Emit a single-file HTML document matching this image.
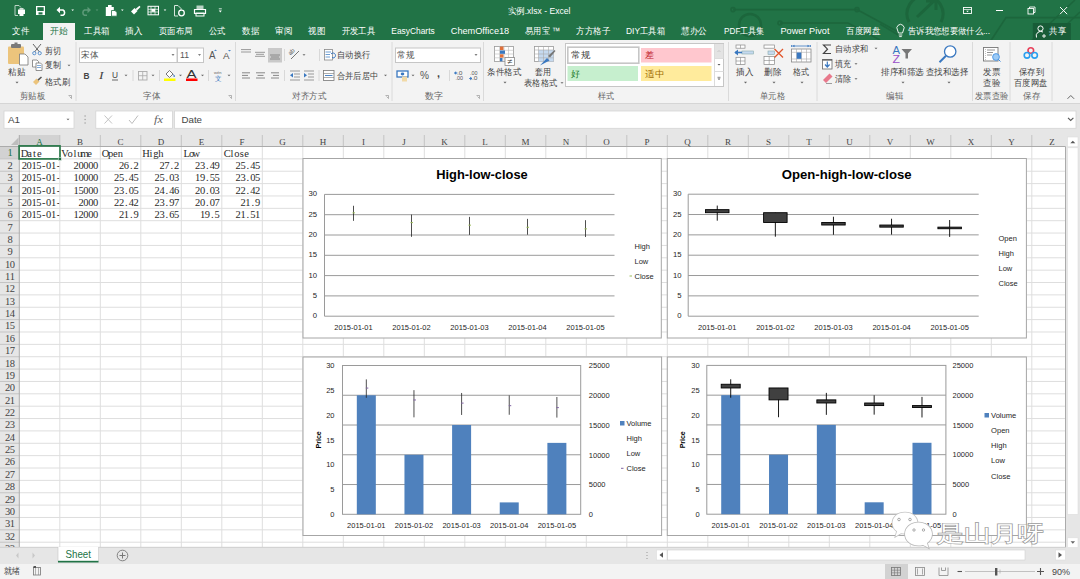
<!DOCTYPE html><html><head><meta charset="utf-8"><style>*{margin:0;padding:0}html,body{width:1080px;height:579px;overflow:hidden;background:#fff;font-family:"Liberation Sans",sans-serif}</style></head><body><svg width="1080" height="579" viewBox="0 0 1080 579" style="position:absolute;left:0;top:0;font-family:'Liberation Sans',sans-serif">
<rect x="0" y="0" width="1080" height="40" fill="#217346" />
<g stroke="#1b6239" stroke-width="1.6" fill="none" opacity="0.75">
<path d="M733 9.6H857L880 22L900 33"/>
<circle cx="733" cy="9.6" r="2"/><circle cx="857" cy="9.6" r="2"/>
<path d="M780 23H848L880 40"/><circle cx="780" cy="23" r="2"/>
<circle cx="750" cy="25" r="11" stroke-width="2.5"/>
<path d="M909 22A18 18 0 1 1 941 22" stroke-width="3"/>
<path d="M917 17L935 0M926 1H936V10" stroke-width="3"/>
<path d="M990 42L1006 17.6H1080"/>
<path d="M1030 42L1075 0M1048 42L1080 12"/>
<path d="M880 24L900 36"/>
</g>
<g fill="none" stroke="#fff" stroke-width="1">
<path d="M19 5.5H15V15.5H18" stroke="#b9d3c4"/>
<path d="M19 5.5L21 7.5" stroke="#b9d3c4"/>
</g>
<rect x="18" y="9.5" width="7" height="4.5" fill="#fff" />
<rect x="19.5" y="8" width="4" height="2" fill="#cfe0d6" />
<rect x="19.5" y="13.5" width="4" height="2.5" fill="#fff" />
<rect x="36" y="6" width="9" height="9" fill="#fff" />
<rect x="37.3" y="7.2" width="6.4" height="3.8" fill="#217346" />
<rect x="38.5" y="12.3" width="4" height="2.2" fill="#217346" />
<path d="M58.5 10H63A3 3 0 0 1 63 15.3H60.5" fill="none" stroke="#fff" stroke-width="1.6"/>
<path d="M56.5 10L60 6.8V13.2Z" fill="#fff"/>
<path d="M71.40 9.50h2.6l-1.30 1.6z" fill="#fff"/>
<path d="M89 10H84.5A3 3 0 0 0 84.5 15.3H87" fill="none" stroke="#5c9a78" stroke-width="1.6"/>
<path d="M91 10L87.5 6.8V13.2Z" fill="#5c9a78"/>
<path d="M95.70 9.50h2.6l-1.30 1.6z" fill="#5c9a78"/>
<rect x="105.8" y="7" width="8" height="9" fill="#fff" />
<rect x="108" y="5" width="3.6" height="2.5" fill="#fff" />
<path d="M111.5 10.5H115L117 12.5V16.2H111.5Z" fill="#fff" stroke="#217346" stroke-width="0.8"/>
<path d="M121.00 9.50h2.6l-1.30 1.6z" fill="#fff"/>
<path d="M131 11.5L134.5 8L137.5 11L134 14.5Z" fill="#fff"/>
<path d="M135.5 9L139.5 5.8L140.5 7L137 10.5Z" fill="#fff"/>
<rect x="148" y="6.3" width="10.5" height="8.5" fill="none" stroke="#fff" stroke-width="1" />
<path d="M148 9.3H158.5M148 12H158.5M151 6.3V14.8M155 6.3V14.8" stroke="#fff" stroke-width="0.7"/>
<rect x="151.5" y="8.8" width="3.5" height="3" fill="#fff" />
<path d="M163.70 9.50h2.6l-1.30 1.6z" fill="#fff"/>
<path d="M178 5.5H174.5V16H178M178 5.5L181 8.5V10" fill="none" stroke="#d6e6dc" stroke-width="1"/>
<circle cx="181.5" cy="13" r="2.8" fill="none" stroke="#fff" stroke-width="1.3"/>
<rect x="196.5" y="5.5" width="7" height="3.5" fill="#b9d3c4" />
<path d="M194.5 9.5H205.5V13.5H194.5Z" fill="none" stroke="#fff" stroke-width="1.2"/>
<rect x="196" y="13" width="8" height="3" fill="none" stroke="#fff" stroke-width="1" />
<line x1="218.8" y1="8.8" x2="221.8" y2="8.8" stroke="#fff" stroke-width="0.8" />
<path d="M218.80 10.60h3l-1.50 1.8z" fill="#fff"/>
<text x="507.50" y="14.15" font-size="9" fill="#fff" textLength="63" lengthAdjust="spacingAndGlyphs" >实例.xlsx - Excel</text>
<rect x="963.5" y="7.5" width="8" height="6" fill="none" stroke="#fff" stroke-width="0.9" />
<line x1="963.5" y1="9.5" x2="971.5" y2="9.5" stroke="#fff" stroke-width="0.7" />
<path d="M966.20 10.80h2.6l-1.30 1.4z" fill="#fff"/>
<line x1="996" y1="10.5" x2="1003" y2="10.5" stroke="#fff" stroke-width="1" />
<rect x="1028" y="8.5" width="5.5" height="5.5" fill="none" stroke="#fff" stroke-width="0.9" />
<path d="M1029.5 8.5V7H1035V12.5H1033.5" fill="none" stroke="#fff" stroke-width="0.9"/>
<path d="M1060 7L1067.2 14.2M1067.2 7L1060 14.2" stroke="#fff" stroke-width="1"/>
<rect x="43" y="23" width="32" height="17" fill="#f3f3f3" />
<text x="12.00" y="34.22" font-size="9.2" fill="#fff" textLength="17" lengthAdjust="spacingAndGlyphs" >文件</text>
<text x="50.00" y="34.22" font-size="9.2" fill="#217346" textLength="17.5" lengthAdjust="spacingAndGlyphs" >开始</text>
<text x="84.00" y="34.22" font-size="9.2" fill="#fff" textLength="25.5" lengthAdjust="spacingAndGlyphs" >工具箱</text>
<text x="125.00" y="34.22" font-size="9.2" fill="#fff" textLength="17" lengthAdjust="spacingAndGlyphs" >插入</text>
<text x="159.00" y="34.22" font-size="9.2" fill="#fff" textLength="33.5" lengthAdjust="spacingAndGlyphs" >页面布局</text>
<text x="209.00" y="34.22" font-size="9.2" fill="#fff" textLength="16.5" lengthAdjust="spacingAndGlyphs" >公式</text>
<text x="242.00" y="34.22" font-size="9.2" fill="#fff" textLength="17" lengthAdjust="spacingAndGlyphs" >数据</text>
<text x="275.00" y="34.22" font-size="9.2" fill="#fff" textLength="17" lengthAdjust="spacingAndGlyphs" >审阅</text>
<text x="308.00" y="34.22" font-size="9.2" fill="#fff" textLength="17" lengthAdjust="spacingAndGlyphs" >视图</text>
<text x="341.75" y="34.22" font-size="9.2" fill="#fff" textLength="33.25" lengthAdjust="spacingAndGlyphs" >开发工具</text>
<text x="391.30" y="34.22" font-size="9.2" fill="#fff" textLength="43.4" lengthAdjust="spacingAndGlyphs" >EasyCharts</text>
<text x="450.80" y="34.22" font-size="9.2" fill="#fff" textLength="58.4" lengthAdjust="spacingAndGlyphs" >ChemOffice18</text>
<text x="525.30" y="34.22" font-size="9.2" fill="#fff" textLength="35" lengthAdjust="spacingAndGlyphs" >易用宝 ™</text>
<text x="576.00" y="34.22" font-size="9.2" fill="#fff" textLength="34" lengthAdjust="spacingAndGlyphs" >方方格子</text>
<text x="626.00" y="34.22" font-size="9.2" fill="#fff" textLength="39" lengthAdjust="spacingAndGlyphs" >DIY工具箱</text>
<text x="681.00" y="34.22" font-size="9.2" fill="#fff" textLength="26" lengthAdjust="spacingAndGlyphs" >慧办公</text>
<text x="724.00" y="34.22" font-size="9.2" fill="#fff" textLength="40.5" lengthAdjust="spacingAndGlyphs" >PDF工具集</text>
<text x="780.50" y="34.22" font-size="9.2" fill="#fff" textLength="49" lengthAdjust="spacingAndGlyphs" >Power Pivot</text>
<text x="846.00" y="34.22" font-size="9.2" fill="#fff" textLength="34" lengthAdjust="spacingAndGlyphs" >百度网盘</text>
<path d="M897.5 30A3.6 3.6 0 1 1 903.5 30L902.5 33H898.5Z" fill="none" stroke="#fff" stroke-width="0.9"/>
<line x1="898.7" y1="35" x2="902.3" y2="35" stroke="#fff" stroke-width="0.9" />
<line x1="899.2" y1="36.6" x2="901.8" y2="36.6" stroke="#fff" stroke-width="0.9" />
<text x="908.00" y="34.22" font-size="9.2" fill="#fff" textLength="82" lengthAdjust="spacingAndGlyphs" >告诉我您想要做什么...</text>
<rect x="1032.8" y="23" width="38" height="17" fill="#185c37" />
<circle cx="1040.5" cy="28.5" r="2.6" fill="none" stroke="#fff" stroke-width="1"/>
<path d="M1036.5 37.5A4.5 4.5 0 0 1 1043 32" fill="none" stroke="#fff" stroke-width="1"/>
<path d="M1042 36H1046M1044 34V38" stroke="#fff" stroke-width="0.9"/>
<text x="1049.40" y="34.22" font-size="9.2" fill="#fff" textLength="16.6" lengthAdjust="spacingAndGlyphs" >共享</text>
<rect x="0" y="40" width="1080" height="63" fill="#f3f3f3" />
<line x1="0" y1="103.5" x2="1080" y2="103.5" stroke="#d5d5d5" stroke-width="1" />
<line x1="76" y1="42" x2="76" y2="101" stroke="#dadada" stroke-width="1" />
<line x1="235.5" y1="42" x2="235.5" y2="101" stroke="#dadada" stroke-width="1" />
<line x1="392" y1="42" x2="392" y2="101" stroke="#dadada" stroke-width="1" />
<line x1="483.5" y1="42" x2="483.5" y2="101" stroke="#dadada" stroke-width="1" />
<line x1="728.5" y1="42" x2="728.5" y2="101" stroke="#dadada" stroke-width="1" />
<line x1="817" y1="42" x2="817" y2="101" stroke="#dadada" stroke-width="1" />
<line x1="972.5" y1="42" x2="972.5" y2="101" stroke="#dadada" stroke-width="1" />
<line x1="1010" y1="42" x2="1010" y2="101" stroke="#dadada" stroke-width="1" />
<line x1="1052" y1="42" x2="1052" y2="101" stroke="#dadada" stroke-width="1" />
<text x="20.00" y="99.47" font-size="8.5" fill="#666" textLength="25" lengthAdjust="spacingAndGlyphs" >剪贴板</text>
<text x="143.00" y="99.47" font-size="8.5" fill="#666" textLength="17" lengthAdjust="spacingAndGlyphs" >字体</text>
<text x="292.00" y="99.47" font-size="8.5" fill="#666" textLength="34" lengthAdjust="spacingAndGlyphs" >对齐方式</text>
<text x="425.00" y="99.47" font-size="8.5" fill="#666" textLength="18" lengthAdjust="spacingAndGlyphs" >数字</text>
<text x="598.00" y="99.47" font-size="8.5" fill="#666" textLength="16" lengthAdjust="spacingAndGlyphs" >样式</text>
<text x="760.00" y="99.47" font-size="8.5" fill="#666" textLength="25" lengthAdjust="spacingAndGlyphs" >单元格</text>
<text x="886.00" y="99.47" font-size="8.5" fill="#666" textLength="17" lengthAdjust="spacingAndGlyphs" >编辑</text>
<text x="975.00" y="99.47" font-size="8.5" fill="#666" textLength="33" lengthAdjust="spacingAndGlyphs" >发票查验</text>
<text x="1023.00" y="99.47" font-size="8.5" fill="#666" textLength="17" lengthAdjust="spacingAndGlyphs" >保存</text>
<path d="M68.5 95.5H71.5V98.5" fill="none" stroke="#888" stroke-width="0.6"/>
<path d="M69.5 96.5L71.5 98.5" fill="none" stroke="#888" stroke-width="0.6"/>
<path d="M228.5 95.5H231.5V98.5" fill="none" stroke="#888" stroke-width="0.6"/>
<path d="M229.5 96.5L231.5 98.5" fill="none" stroke="#888" stroke-width="0.6"/>
<path d="M385.5 95.5H388.5V98.5" fill="none" stroke="#888" stroke-width="0.6"/>
<path d="M386.5 96.5L388.5 98.5" fill="none" stroke="#888" stroke-width="0.6"/>
<path d="M476.5 95.5H479.5V98.5" fill="none" stroke="#888" stroke-width="0.6"/>
<path d="M477.5 96.5L479.5 98.5" fill="none" stroke="#888" stroke-width="0.6"/>
<path d="M1067.5 98.8L1070.8 95.5L1074.1 98.8" fill="none" stroke="#666" stroke-width="1"/>
<rect x="8" y="46.5" width="16" height="17.5" fill="#ecc47c" rx="1"/>
<rect x="11" y="44" width="10" height="4" fill="#7a7a7a" rx="1"/>
<rect x="14.5" y="42.5" width="3" height="2" fill="#7a7a7a" />
<path d="M19.5 54H25L28 57V65H19.5Z" fill="#fff" stroke="#777" stroke-width="0.8"/>
<text x="8.00" y="75.01" font-size="8.6" fill="#444" textLength="17" lengthAdjust="spacingAndGlyphs" >粘贴</text>
<path d="M15.50 81.85h3l-1.50 1.7z" fill="#666"/>
<path d="M33 44L39.5 52M41 44L34.5 52" stroke="#555" stroke-width="0.9"/>
<circle cx="34.3" cy="53.2" r="1.6" fill="none" stroke="#4a86c8" stroke-width="0.9"/>
<circle cx="39.7" cy="53.2" r="1.6" fill="none" stroke="#4a86c8" stroke-width="0.9"/>
<text x="45.00" y="53.51" font-size="8.6" fill="#444" textLength="16" lengthAdjust="spacingAndGlyphs" >剪切</text>
<path d="M32.5 60H37L38.5 61.5V67H32.5Z" fill="#fff" stroke="#777" stroke-width="0.8"/>
<path d="M36 63H40.5L42 64.5V70.5H36Z" fill="#fff" stroke="#777" stroke-width="0.8"/>
<path d="M37 65.5H41M37 67.5H41" stroke="#4a86c8" stroke-width="0.7"/>
<text x="45.00" y="68.21" font-size="8.6" fill="#444" textLength="16" lengthAdjust="spacingAndGlyphs" >复制</text>
<path d="M67.50 64.65h3l-1.50 1.7z" fill="#666"/>
<path d="M33 82L36.5 78.5L39.5 81.5L36 85Z" fill="#ecc47c"/>
<path d="M37.5 79.5L41 76.5L42 77.5L38.5 80.8Z" fill="#555"/>
<text x="45.00" y="84.51" font-size="8.6" fill="#444" textLength="25" lengthAdjust="spacingAndGlyphs" >格式刷</text>
<rect x="79.5" y="48" width="97.5" height="14.5" fill="#fff" stroke="#c6c6c6" stroke-width="1" />
<rect x="177.5" y="48" width="26" height="14.5" fill="#fff" stroke="#c6c6c6" stroke-width="1" />
<text x="81.00" y="58.31" font-size="8.6" fill="#555" textLength="17" lengthAdjust="spacingAndGlyphs" >宋体</text>
<path d="M171.50 54.15h3l-1.50 1.7z" fill="#555"/>
<text x="180.00" y="58.45" font-size="9" fill="#555" textLength="9" lengthAdjust="spacingAndGlyphs" >11</text>
<path d="M198.00 54.15h3l-1.50 1.7z" fill="#555"/>
<text x="209.00" y="59.00" font-size="10" fill="#555" textLength="6.5" lengthAdjust="spacingAndGlyphs" >A</text>
<path d="M214 51L215.5 49.5L217 51Z" fill="#4a86c8"/>
<text x="223.00" y="59.15" font-size="9" fill="#555" textLength="6.5" lengthAdjust="spacingAndGlyphs" >A</text>
<path d="M228 50L229.5 51.5L231 50Z" fill="#4a86c8"/>
<text x="83.50" y="78.83" font-size="9.5" fill="#444" font-weight="bold" textLength="6" lengthAdjust="spacingAndGlyphs" >B</text>
<text x="99.00" y="78.83" font-size="9.5" fill="#444" font-family="Liberation Serif" textLength="4.5" lengthAdjust="spacingAndGlyphs" font-style="italic">I</text>
<text x="112.00" y="78.33" font-size="9.5" fill="#444" textLength="6" lengthAdjust="spacingAndGlyphs" >U</text>
<line x1="112" y1="80" x2="118" y2="80" stroke="#444" stroke-width="0.8" />
<path d="M124.50 74.65h3l-1.50 1.7z" fill="#666"/>
<line x1="133" y1="70" x2="133" y2="81" stroke="#d8d8d8" stroke-width="1" />
<rect x="138.5" y="71.5" width="8.5" height="8.5" fill="none" stroke="#aaa" stroke-width="0.9" />
<path d="M142.7 71.5V80M138.5 75.7H147" stroke="#aaa" stroke-width="0.8"/>
<path d="M151.50 74.65h3l-1.50 1.7z" fill="#666"/>
<line x1="159.5" y1="70" x2="159.5" y2="81" stroke="#d8d8d8" stroke-width="1" />
<path d="M166 74L169.5 70.5L173 74L169.5 77.5Z" fill="#fff" stroke="#555" stroke-width="0.8"/>
<path d="M173.5 74.5Q175 76 174 77" fill="#3a78c0" stroke="#3a78c0" stroke-width="1"/>
<rect x="164" y="78.5" width="11.5" height="2.5" fill="#ffff00" />
<path d="M179.00 74.65h3l-1.50 1.7z" fill="#666"/>
<text x="186.50" y="78.17" font-size="10.5" fill="#333" textLength="10" lengthAdjust="spacingAndGlyphs" >A</text>
<rect x="186" y="78.5" width="11.5" height="2.5" fill="#ff0000" />
<path d="M201.00 74.65h3l-1.50 1.7z" fill="#666"/>
<line x1="208.5" y1="70" x2="208.5" y2="81" stroke="#d8d8d8" stroke-width="1" />
<text x="214.00" y="73.67" font-size="4.2" fill="#666" textLength="7.5" lengthAdjust="spacingAndGlyphs" >wén</text>
<text x="214.50" y="80.88" font-size="6.5" fill="#3a78c0" textLength="6.5" lengthAdjust="spacingAndGlyphs" >文</text>
<path d="M227.50 74.65h3l-1.50 1.7z" fill="#666"/>
<line x1="241" y1="49.6" x2="251" y2="49.6" stroke="#999" stroke-width="1" /><line x1="241" y1="52.0" x2="251" y2="52.0" stroke="#999" stroke-width="1" />
<line x1="255" y1="52.3" x2="265" y2="52.3" stroke="#999" stroke-width="1" /><line x1="256" y1="54.3" x2="264" y2="54.3" stroke="#999" stroke-width="1" /><line x1="255" y1="56.3" x2="265" y2="56.3" stroke="#999" stroke-width="1" />
<rect x="268" y="48" width="14" height="14.5" fill="#c9c9c9" />
<line x1="270" y1="55" x2="280" y2="55" stroke="#888" stroke-width="1" /><line x1="271" y1="57" x2="279" y2="57" stroke="#888" stroke-width="1" /><line x1="270" y1="59" x2="280" y2="59" stroke="#888" stroke-width="1" />
<line x1="284.5" y1="49" x2="284.5" y2="61" stroke="#d8d8d8" stroke-width="1" />
<path d="M291 59L299 51" fill="none" stroke="#666" stroke-width="0.9"/>
<text x="0" y="0" font-size="6" fill="#555" transform="translate(290.5,55.5) rotate(-45)">ab</text>
<path d="M302.50 54.15h3l-1.50 1.7z" fill="#666"/>
<line x1="319.5" y1="49" x2="319.5" y2="61" stroke="#d8d8d8" stroke-width="1" />
<rect x="324.5" y="49.5" width="8" height="10.5" fill="#fff" stroke="#888" stroke-width="0.8" />
<path d="M325.5 52H331M325.5 54.5H330M325.5 57H330" stroke="#4a86c8" stroke-width="0.8"/>
<path d="M331 54A2.5 2.5 0 1 1 333 58L332 57" fill="none" stroke="#3a78c0" stroke-width="1"/>
<text x="337.00" y="58.01" font-size="8.6" fill="#444" textLength="33" lengthAdjust="spacingAndGlyphs" >自动换行</text>
<line x1="242" y1="72.8" x2="250" y2="72.8" stroke="#888" stroke-width="1" /><line x1="242" y1="75.39999999999999" x2="248" y2="75.39999999999999" stroke="#888" stroke-width="1" /><line x1="242" y1="78.0" x2="250" y2="78.0" stroke="#888" stroke-width="1" />
<line x1="256" y1="72.8" x2="265" y2="72.8" stroke="#888" stroke-width="1" /><line x1="257.5" y1="75.39999999999999" x2="263.5" y2="75.39999999999999" stroke="#888" stroke-width="1" /><line x1="256" y1="78.0" x2="265" y2="78.0" stroke="#888" stroke-width="1" />
<line x1="271" y1="72.8" x2="279" y2="72.8" stroke="#888" stroke-width="1" /><line x1="273" y1="75.39999999999999" x2="279" y2="75.39999999999999" stroke="#888" stroke-width="1" /><line x1="271" y1="78.0" x2="279" y2="78.0" stroke="#888" stroke-width="1" />
<line x1="284.5" y1="70" x2="284.5" y2="81" stroke="#d8d8d8" stroke-width="1" />
<line x1="290" y1="71" x2="300" y2="71" stroke="#999" stroke-width="1" /><line x1="294" y1="74" x2="300" y2="74" stroke="#999" stroke-width="1" /><line x1="294" y1="77" x2="300" y2="77" stroke="#999" stroke-width="1" /><line x1="290" y1="80" x2="300" y2="80" stroke="#999" stroke-width="1" />
<path d="M290 75.2L293 73V77.4Z" fill="#3a78c0"/>
<line x1="304" y1="71" x2="314" y2="71" stroke="#999" stroke-width="1" /><line x1="308" y1="74" x2="314" y2="74" stroke="#999" stroke-width="1" /><line x1="308" y1="77" x2="314" y2="77" stroke="#999" stroke-width="1" /><line x1="304" y1="80" x2="314" y2="80" stroke="#999" stroke-width="1" />
<path d="M307 75.2L304 73V77.4Z" fill="#3a78c0"/>
<line x1="319" y1="70" x2="319" y2="81" stroke="#d8d8d8" stroke-width="1" />
<rect x="323.5" y="70.5" width="10.5" height="10" fill="#fff" stroke="#777" stroke-width="0.8" />
<path d="M323.5 73.5H334M323.5 77.5H334" stroke="#777" stroke-width="0.6"/>
<path d="M325 75.5H332.5" stroke="#3a78c0" stroke-width="0.9"/>
<text x="337.00" y="78.51" font-size="8.6" fill="#444" textLength="41" lengthAdjust="spacingAndGlyphs" >合并后居中</text>
<path d="M384.00 74.65h3l-1.50 1.7z" fill="#666"/>
<rect x="395.5" y="48" width="85" height="14.5" fill="#fff" stroke="#c6c6c6" stroke-width="1" />
<text x="397.00" y="58.31" font-size="8.6" fill="#555" textLength="17" lengthAdjust="spacingAndGlyphs" >常规</text>
<path d="M474.50 54.15h3l-1.50 1.7z" fill="#555"/>
<rect x="397" y="71" width="11" height="6" fill="#fff" stroke="#3a78c0" stroke-width="1.3" />
<ellipse cx="402.5" cy="74" rx="1.8" ry="1.4" fill="#3a78c0"/>
<rect x="402" y="76.5" width="5" height="5" fill="#f1d9a6" />
<path d="M411.50 74.65h3l-1.50 1.7z" fill="#666"/>
<text x="420.00" y="79.00" font-size="10" fill="#555" textLength="9" lengthAdjust="spacingAndGlyphs" >%</text>
<text x="437.00" y="77.15" font-size="11" fill="#444" font-weight="bold" textLength="3" lengthAdjust="spacingAndGlyphs" >,</text>
<line x1="449.5" y1="70" x2="449.5" y2="81" stroke="#d8d8d8" stroke-width="1" />
<text x="457.00" y="74.92" font-size="5.5" fill="#555" textLength="5.5" lengthAdjust="spacingAndGlyphs" >.0</text>
<text x="455.50" y="80.42" font-size="5.5" fill="#555" textLength="7.5" lengthAdjust="spacingAndGlyphs" >.00</text>
<path d="M454.5 73H457.5M454.5 73L456 71.8V74.2Z" stroke="#3a78c0" fill="#3a78c0" stroke-width="0.8"/>
<text x="470.00" y="74.92" font-size="5.5" fill="#555" textLength="7.5" lengthAdjust="spacingAndGlyphs" >.00</text>
<text x="472.00" y="80.42" font-size="5.5" fill="#555" textLength="5.5" lengthAdjust="spacingAndGlyphs" >.0</text>
<path d="M469 78.5H472M472 78.5L470.5 77.3V79.7Z" stroke="#3a78c0" fill="#3a78c0" stroke-width="0.8"/>
<rect x="494.5" y="46.5" width="19" height="15" fill="#fff" stroke="#999" stroke-width="0.8" />
<path d="M494.5 50.3H513.5M494.5 54H513.5M494.5 57.8H513.5M499.5 46.5V61.5M504 46.5V61.5M508.5 46.5V61.5" stroke="#bbb" stroke-width="0.6"/>
<rect x="500" y="46.5" width="3.5" height="3.5" fill="#e0703a" />
<rect x="500" y="50.5" width="5" height="3.3" fill="#3a78c0" />
<rect x="500" y="54.3" width="3.5" height="3.3" fill="#e0703a" />
<rect x="500" y="58" width="2.5" height="3.3" fill="#3a78c0" />
<rect x="505" y="57.5" width="9.5" height="8" fill="#fff" stroke="#888" stroke-width="0.8" />
<text x="507.50" y="63.95" font-size="7" fill="#333" textLength="5" lengthAdjust="spacingAndGlyphs" >≠</text>
<text x="487.00" y="75.01" font-size="8.6" fill="#444" textLength="34" lengthAdjust="spacingAndGlyphs" >条件格式</text>
<path d="M503.50 81.85h3l-1.50 1.7z" fill="#666"/>
<rect x="534.5" y="46.5" width="19" height="15" fill="#fff" stroke="#999" stroke-width="0.8" />
<rect x="538.5" y="50" width="15" height="11.5" fill="#c5d9ef" />
<path d="M534.5 50H553.5M534.5 54H553.5M534.5 57.8H553.5M538.5 46.5V61.5M543.5 46.5V61.5M548.5 46.5V61.5" stroke="#aaa" stroke-width="0.6"/>
<path d="M548 56L554.5 50L555.5 51L550 57.5Z" fill="#777"/>
<path d="M540 65.5L547 58L549.5 60.5Z" fill="#3a78c0"/>
<text x="535.00" y="75.01" font-size="8.6" fill="#444" textLength="16" lengthAdjust="spacingAndGlyphs" >套用</text>
<text x="524.00" y="86.01" font-size="8.6" fill="#444" textLength="33" lengthAdjust="spacingAndGlyphs" >表格格式</text>
<path d="M560.50 82.15h3l-1.50 1.7z" fill="#666"/>
<rect x="565.5" y="43.5" width="158" height="43" fill="#fff" stroke="#c6c6c6" stroke-width="1" />
<rect x="567.8" y="47.2" width="71" height="16" fill="#fff" stroke="#c6c6c6" stroke-width="1.6" />
<text x="571.00" y="58.45" font-size="9" fill="#444" font-family="Liberation Serif" textLength="19" lengthAdjust="spacingAndGlyphs" >常规</text>
<rect x="641" y="48" width="70.5" height="14.5" fill="#ffc7ce" />
<text x="645.00" y="58.45" font-size="9" fill="#c0202a" font-family="Liberation Serif" textLength="9" lengthAdjust="spacingAndGlyphs" >差</text>
<rect x="567.5" y="66" width="70.5" height="15" fill="#c6efce" />
<text x="571.00" y="76.65" font-size="9" fill="#1a7a2a" font-family="Liberation Serif" textLength="9" lengthAdjust="spacingAndGlyphs" >好</text>
<rect x="641" y="66" width="70.5" height="15" fill="#ffeb9c" />
<text x="645.00" y="76.65" font-size="9" fill="#9c6a00" font-family="Liberation Serif" textLength="19" lengthAdjust="spacingAndGlyphs" >适中</text>
<rect x="714.5" y="44" width="9" height="14.5" fill="#e3e3e3" />
<line x1="714.5" y1="44" x2="714.5" y2="86" stroke="#dcdcdc" stroke-width="1" />
<line x1="714.5" y1="58.5" x2="723.5" y2="58.5" stroke="#dcdcdc" stroke-width="1" />
<line x1="714.5" y1="71.5" x2="723.5" y2="71.5" stroke="#dcdcdc" stroke-width="1" />
<path d="M717.5 52L719 50.5L720.5 52" fill="none" stroke="#bbb" stroke-width="0.7"/>
<path d="M717.50 64.00h3l-1.50 1.6z" fill="#555"/>
<line x1="717.5" y1="77.3" x2="720.5" y2="77.3" stroke="#555" stroke-width="0.7" />
<path d="M717.50 78.50h3l-1.50 1.6z" fill="#555"/>
<rect x="736" y="45" width="9" height="3.2" fill="#fff" stroke="#888" stroke-width="0.7" />
<line x1="740.5" y1="45" x2="740.5" y2="48.2" stroke="#888" stroke-width="0.6" />
<rect x="742" y="51" width="11.5" height="3" fill="#c5d9ef" stroke="#8aa" stroke-width="0.6" />
<path d="M735 52.5H742" stroke="#3a78c0" stroke-width="1.6"/>
<path d="M734.3 52.5L738 49.5V55.5Z" fill="#3a78c0"/>
<rect x="736" y="57.3" width="9" height="7.2" fill="#fff" stroke="#888" stroke-width="0.7" />
<path d="M740.5 57.3V64.5M736 61H745" stroke="#888" stroke-width="0.6"/>
<text x="736.00" y="75.01" font-size="8.6" fill="#444" textLength="17" lengthAdjust="spacingAndGlyphs" >插入</text>
<path d="M744.00 81.85h3l-1.50 1.7z" fill="#666"/>
<rect x="764" y="45" width="10.5" height="3.2" fill="#fff" stroke="#888" stroke-width="0.7" />
<rect x="768" y="51" width="6.5" height="3.5" fill="#c5d9ef" stroke="#8aa" stroke-width="0.6" />
<rect x="764" y="56.5" width="10.5" height="8" fill="#fff" stroke="#888" stroke-width="0.7" />
<path d="M769.2 56.5V64.5M764 60.5H774.5" stroke="#888" stroke-width="0.6"/>
<path d="M774.5 49L783 57.5M783 49L774.5 57.5" stroke="#e0552a" stroke-width="1.3"/>
<text x="764.00" y="75.01" font-size="8.6" fill="#444" textLength="17" lengthAdjust="spacingAndGlyphs" >删除</text>
<path d="M772.50 81.85h3l-1.50 1.7z" fill="#666"/>
<path d="M791.5 45V47M810.5 45V47M792 46H810" stroke="#3a78c0" stroke-width="0.8"/>
<path d="M792.5 46L794.5 44.8V47.2ZM809.5 46L807.5 44.8V47.2Z" fill="#3a78c0"/>
<rect x="791.5" y="49" width="19.5" height="13" fill="#fff" stroke="#888" stroke-width="0.8" />
<path d="M791.5 52.3H811M791.5 59H811M796.5 49V62M801.5 49V62M806.5 49V62" stroke="#aaa" stroke-width="0.6"/>
<rect x="796.7" y="52.5" width="4.6" height="6.3" fill="#3a78c0" />
<text x="793.00" y="75.01" font-size="8.6" fill="#444" textLength="16" lengthAdjust="spacingAndGlyphs" >格式</text>
<path d="M800.50 81.85h3l-1.50 1.7z" fill="#666"/>
<path d="M831 45H823.5L827.5 49.2L823.5 53.5H831" fill="none" stroke="#444" stroke-width="1.2"/>
<text x="835.00" y="52.01" font-size="8.6" fill="#444" textLength="33" lengthAdjust="spacingAndGlyphs" >自动求和</text>
<path d="M874.50 47.65h3l-1.50 1.7z" fill="#666"/>
<rect x="822.5" y="59.5" width="9.5" height="9.5" fill="#fff" stroke="#777" stroke-width="0.9" />
<line x1="822.5" y1="60" x2="832" y2="60" stroke="#555" stroke-width="1.2" />
<path d="M827.3 61.5V66.5M825 64.5L827.3 67L829.6 64.5" fill="none" stroke="#3a78c0" stroke-width="1.2"/>
<text x="835.00" y="67.01" font-size="8.6" fill="#444" textLength="16" lengthAdjust="spacingAndGlyphs" >填充</text>
<path d="M854.50 63.15h3l-1.50 1.7z" fill="#666"/>
<path d="M823 80L829.5 73.5L832.5 76.5L826 83Z" fill="#e8798c"/>
<line x1="826" y1="83.5" x2="832" y2="83.5" stroke="#777" stroke-width="0.7" />
<text x="835.00" y="82.01" font-size="8.6" fill="#444" textLength="16" lengthAdjust="spacingAndGlyphs" >清除</text>
<path d="M854.50 78.15h3l-1.50 1.7z" fill="#666"/>
<text x="892.50" y="53.80" font-size="10" fill="#3a78c0" textLength="7.5" lengthAdjust="spacingAndGlyphs" >A</text>
<text x="892.50" y="62.80" font-size="10" fill="#9a4fc8" textLength="7.5" lengthAdjust="spacingAndGlyphs" >Z</text>
<path d="M901.5 49H912L908 53.5V58.5H905.5V53.5Z" fill="#777"/>
<text x="881.00" y="75.01" font-size="8.6" fill="#444" textLength="43" lengthAdjust="spacingAndGlyphs" >排序和筛选</text>
<path d="M901.50 81.85h3l-1.50 1.7z" fill="#666"/>
<circle cx="950.2" cy="51.5" r="5.7" fill="#fff" stroke="#3a78c0" stroke-width="1.3"/>
<line x1="946" y1="55.7" x2="939.5" y2="62.2" stroke="#3a78c0" stroke-width="2" />
<text x="926.00" y="75.01" font-size="8.6" fill="#444" textLength="42" lengthAdjust="spacingAndGlyphs" >查找和选择</text>
<path d="M947.50 81.85h3l-1.50 1.7z" fill="#666"/>
<rect x="983.5" y="47.5" width="14.5" height="13.5" fill="#fff" stroke="#777" stroke-width="0.9" />
<path d="M985.5 49V60" stroke="#999" stroke-width="0.6" stroke-dasharray="1 1"/>
<path d="M987 50H995M987 52.5H993M987 55H992" stroke="#888" stroke-width="0.9"/>
<circle cx="996" cy="57" r="3.4" fill="#9ccaf5" stroke="#3a8ae0" stroke-width="0.8"/>
<line x1="998.5" y1="59.5" x2="1000.5" y2="61.5" stroke="#3a8ae0" stroke-width="1" />
<text x="983.00" y="75.01" font-size="8.6" fill="#444" textLength="17" lengthAdjust="spacingAndGlyphs" >发票</text>
<text x="983.00" y="86.01" font-size="8.6" fill="#444" textLength="17" lengthAdjust="spacingAndGlyphs" >查验</text>
<circle cx="1030.8" cy="50.5" r="2.8" fill="none" stroke="#e8405a" stroke-width="1.6"/>
<circle cx="1027" cy="55.3" r="2.8" fill="none" stroke="#2a9ff0" stroke-width="1.6"/>
<circle cx="1034.6" cy="55.3" r="2.8" fill="none" stroke="#2a9ff0" stroke-width="1.6"/>
<text x="1019.00" y="75.01" font-size="8.6" fill="#444" textLength="25" lengthAdjust="spacingAndGlyphs" >保存到</text>
<text x="1014.00" y="86.01" font-size="8.6" fill="#444" textLength="33" lengthAdjust="spacingAndGlyphs" >百度网盘</text>
<rect x="0" y="104" width="1080" height="31" fill="#e6e6e6" />
<rect x="4" y="111" width="70" height="17.3" fill="#fff" stroke="#d4d4d4" stroke-width="0.8" />
<text x="8.00" y="123.12" font-size="9.5" fill="#444" textLength="12" lengthAdjust="spacingAndGlyphs" >A1</text>
<path d="M66.50 118.65h3l-1.50 1.7z" fill="#666"/>
<rect x="84.5" y="115.4" width="1.2" height="1.2" fill="#999" />
<rect x="84.5" y="118.9" width="1.2" height="1.2" fill="#999" />
<rect x="84.5" y="122.4" width="1.2" height="1.2" fill="#999" />
<rect x="95.8" y="111" width="76.6" height="17.3" fill="#fff" stroke="#d4d4d4" stroke-width="0.8" />
<path d="M104.5 115.5L112 123.5M112 115.5L104.5 123.5" stroke="#bcbcbc" stroke-width="0.9"/>
<path d="M129 120L132 123.5L138 115.5" fill="none" stroke="#bcbcbc" stroke-width="1"/>
<text x="154.00" y="123.00" font-size="10" fill="#666" font-family="Liberation Serif" textLength="9" lengthAdjust="spacingAndGlyphs" font-style="italic">fx</text>
<rect x="174.5" y="111" width="901.5" height="17.3" fill="#fff" stroke="#d4d4d4" stroke-width="0.8" />
<text x="181.50" y="123.23" font-size="9.8" fill="#444" textLength="20.5" lengthAdjust="spacingAndGlyphs" >Date</text>
<path d="M1068 117.8L1070.7 120.5L1073.4 117.8" fill="none" stroke="#555" stroke-width="1.1"/>
<path d="M11 145L18.5 145L18.5 137.5Z" fill="#bdbdbd"/>
<rect x="0" y="135" width="1066" height="11.5" fill="#e6e6e6"/>
<rect x="0" y="146.5" width="19.3" height="400.5" fill="#e6e6e6"/>
<rect x="19.3" y="146.5" width="1046.2" height="400.5" fill="#fff"/>
<rect x="19.3" y="135" width="40.5" height="11.5" fill="#d2d2d2"/>
<rect x="0" y="146.5" width="19.3" height="12.366" fill="#d2d2d2"/>
<path d="M11 145L18.5 145L18.5 137.5Z" fill="#bdbdbd"/>
<line x1="59.80" y1="146.5" x2="59.80" y2="547" stroke="#dedede" stroke-width="1"/>
<line x1="59.80" y1="135" x2="59.80" y2="146.5" stroke="#c4c4c4" stroke-width="1"/>
<line x1="100.30" y1="146.5" x2="100.30" y2="547" stroke="#dedede" stroke-width="1"/>
<line x1="100.30" y1="135" x2="100.30" y2="146.5" stroke="#c4c4c4" stroke-width="1"/>
<line x1="140.80" y1="146.5" x2="140.80" y2="547" stroke="#dedede" stroke-width="1"/>
<line x1="140.80" y1="135" x2="140.80" y2="146.5" stroke="#c4c4c4" stroke-width="1"/>
<line x1="181.30" y1="146.5" x2="181.30" y2="547" stroke="#dedede" stroke-width="1"/>
<line x1="181.30" y1="135" x2="181.30" y2="146.5" stroke="#c4c4c4" stroke-width="1"/>
<line x1="221.80" y1="146.5" x2="221.80" y2="547" stroke="#dedede" stroke-width="1"/>
<line x1="221.80" y1="135" x2="221.80" y2="146.5" stroke="#c4c4c4" stroke-width="1"/>
<line x1="262.30" y1="146.5" x2="262.30" y2="547" stroke="#dedede" stroke-width="1"/>
<line x1="262.30" y1="135" x2="262.30" y2="146.5" stroke="#c4c4c4" stroke-width="1"/>
<line x1="302.80" y1="146.5" x2="302.80" y2="547" stroke="#dedede" stroke-width="1"/>
<line x1="302.80" y1="135" x2="302.80" y2="146.5" stroke="#c4c4c4" stroke-width="1"/>
<line x1="343.30" y1="146.5" x2="343.30" y2="547" stroke="#dedede" stroke-width="1"/>
<line x1="343.30" y1="135" x2="343.30" y2="146.5" stroke="#c4c4c4" stroke-width="1"/>
<line x1="383.80" y1="146.5" x2="383.80" y2="547" stroke="#dedede" stroke-width="1"/>
<line x1="383.80" y1="135" x2="383.80" y2="146.5" stroke="#c4c4c4" stroke-width="1"/>
<line x1="424.30" y1="146.5" x2="424.30" y2="547" stroke="#dedede" stroke-width="1"/>
<line x1="424.30" y1="135" x2="424.30" y2="146.5" stroke="#c4c4c4" stroke-width="1"/>
<line x1="464.80" y1="146.5" x2="464.80" y2="547" stroke="#dedede" stroke-width="1"/>
<line x1="464.80" y1="135" x2="464.80" y2="146.5" stroke="#c4c4c4" stroke-width="1"/>
<line x1="505.30" y1="146.5" x2="505.30" y2="547" stroke="#dedede" stroke-width="1"/>
<line x1="505.30" y1="135" x2="505.30" y2="146.5" stroke="#c4c4c4" stroke-width="1"/>
<line x1="545.80" y1="146.5" x2="545.80" y2="547" stroke="#dedede" stroke-width="1"/>
<line x1="545.80" y1="135" x2="545.80" y2="146.5" stroke="#c4c4c4" stroke-width="1"/>
<line x1="586.30" y1="146.5" x2="586.30" y2="547" stroke="#dedede" stroke-width="1"/>
<line x1="586.30" y1="135" x2="586.30" y2="146.5" stroke="#c4c4c4" stroke-width="1"/>
<line x1="626.80" y1="146.5" x2="626.80" y2="547" stroke="#dedede" stroke-width="1"/>
<line x1="626.80" y1="135" x2="626.80" y2="146.5" stroke="#c4c4c4" stroke-width="1"/>
<line x1="667.30" y1="146.5" x2="667.30" y2="547" stroke="#dedede" stroke-width="1"/>
<line x1="667.30" y1="135" x2="667.30" y2="146.5" stroke="#c4c4c4" stroke-width="1"/>
<line x1="707.80" y1="146.5" x2="707.80" y2="547" stroke="#dedede" stroke-width="1"/>
<line x1="707.80" y1="135" x2="707.80" y2="146.5" stroke="#c4c4c4" stroke-width="1"/>
<line x1="748.30" y1="146.5" x2="748.30" y2="547" stroke="#dedede" stroke-width="1"/>
<line x1="748.30" y1="135" x2="748.30" y2="146.5" stroke="#c4c4c4" stroke-width="1"/>
<line x1="788.80" y1="146.5" x2="788.80" y2="547" stroke="#dedede" stroke-width="1"/>
<line x1="788.80" y1="135" x2="788.80" y2="146.5" stroke="#c4c4c4" stroke-width="1"/>
<line x1="829.30" y1="146.5" x2="829.30" y2="547" stroke="#dedede" stroke-width="1"/>
<line x1="829.30" y1="135" x2="829.30" y2="146.5" stroke="#c4c4c4" stroke-width="1"/>
<line x1="869.80" y1="146.5" x2="869.80" y2="547" stroke="#dedede" stroke-width="1"/>
<line x1="869.80" y1="135" x2="869.80" y2="146.5" stroke="#c4c4c4" stroke-width="1"/>
<line x1="910.30" y1="146.5" x2="910.30" y2="547" stroke="#dedede" stroke-width="1"/>
<line x1="910.30" y1="135" x2="910.30" y2="146.5" stroke="#c4c4c4" stroke-width="1"/>
<line x1="950.80" y1="146.5" x2="950.80" y2="547" stroke="#dedede" stroke-width="1"/>
<line x1="950.80" y1="135" x2="950.80" y2="146.5" stroke="#c4c4c4" stroke-width="1"/>
<line x1="991.30" y1="146.5" x2="991.30" y2="547" stroke="#dedede" stroke-width="1"/>
<line x1="991.30" y1="135" x2="991.30" y2="146.5" stroke="#c4c4c4" stroke-width="1"/>
<line x1="1031.80" y1="146.5" x2="1031.80" y2="547" stroke="#dedede" stroke-width="1"/>
<line x1="1031.80" y1="135" x2="1031.80" y2="146.5" stroke="#c4c4c4" stroke-width="1"/>
<line x1="19.3" y1="158.87" x2="1065.5" y2="158.87" stroke="#dedede" stroke-width="1"/>
<line x1="0" y1="158.87" x2="19.3" y2="158.87" stroke="#c4c4c4" stroke-width="1"/>
<line x1="19.3" y1="171.23" x2="1065.5" y2="171.23" stroke="#dedede" stroke-width="1"/>
<line x1="0" y1="171.23" x2="19.3" y2="171.23" stroke="#c4c4c4" stroke-width="1"/>
<line x1="19.3" y1="183.60" x2="1065.5" y2="183.60" stroke="#dedede" stroke-width="1"/>
<line x1="0" y1="183.60" x2="19.3" y2="183.60" stroke="#c4c4c4" stroke-width="1"/>
<line x1="19.3" y1="195.96" x2="1065.5" y2="195.96" stroke="#dedede" stroke-width="1"/>
<line x1="0" y1="195.96" x2="19.3" y2="195.96" stroke="#c4c4c4" stroke-width="1"/>
<line x1="19.3" y1="208.33" x2="1065.5" y2="208.33" stroke="#dedede" stroke-width="1"/>
<line x1="0" y1="208.33" x2="19.3" y2="208.33" stroke="#c4c4c4" stroke-width="1"/>
<line x1="19.3" y1="220.70" x2="1065.5" y2="220.70" stroke="#dedede" stroke-width="1"/>
<line x1="0" y1="220.70" x2="19.3" y2="220.70" stroke="#c4c4c4" stroke-width="1"/>
<line x1="19.3" y1="233.06" x2="1065.5" y2="233.06" stroke="#dedede" stroke-width="1"/>
<line x1="0" y1="233.06" x2="19.3" y2="233.06" stroke="#c4c4c4" stroke-width="1"/>
<line x1="19.3" y1="245.43" x2="1065.5" y2="245.43" stroke="#dedede" stroke-width="1"/>
<line x1="0" y1="245.43" x2="19.3" y2="245.43" stroke="#c4c4c4" stroke-width="1"/>
<line x1="19.3" y1="257.79" x2="1065.5" y2="257.79" stroke="#dedede" stroke-width="1"/>
<line x1="0" y1="257.79" x2="19.3" y2="257.79" stroke="#c4c4c4" stroke-width="1"/>
<line x1="19.3" y1="270.16" x2="1065.5" y2="270.16" stroke="#dedede" stroke-width="1"/>
<line x1="0" y1="270.16" x2="19.3" y2="270.16" stroke="#c4c4c4" stroke-width="1"/>
<line x1="19.3" y1="282.53" x2="1065.5" y2="282.53" stroke="#dedede" stroke-width="1"/>
<line x1="0" y1="282.53" x2="19.3" y2="282.53" stroke="#c4c4c4" stroke-width="1"/>
<line x1="19.3" y1="294.89" x2="1065.5" y2="294.89" stroke="#dedede" stroke-width="1"/>
<line x1="0" y1="294.89" x2="19.3" y2="294.89" stroke="#c4c4c4" stroke-width="1"/>
<line x1="19.3" y1="307.26" x2="1065.5" y2="307.26" stroke="#dedede" stroke-width="1"/>
<line x1="0" y1="307.26" x2="19.3" y2="307.26" stroke="#c4c4c4" stroke-width="1"/>
<line x1="19.3" y1="319.62" x2="1065.5" y2="319.62" stroke="#dedede" stroke-width="1"/>
<line x1="0" y1="319.62" x2="19.3" y2="319.62" stroke="#c4c4c4" stroke-width="1"/>
<line x1="19.3" y1="331.99" x2="1065.5" y2="331.99" stroke="#dedede" stroke-width="1"/>
<line x1="0" y1="331.99" x2="19.3" y2="331.99" stroke="#c4c4c4" stroke-width="1"/>
<line x1="19.3" y1="344.36" x2="1065.5" y2="344.36" stroke="#dedede" stroke-width="1"/>
<line x1="0" y1="344.36" x2="19.3" y2="344.36" stroke="#c4c4c4" stroke-width="1"/>
<line x1="19.3" y1="356.72" x2="1065.5" y2="356.72" stroke="#dedede" stroke-width="1"/>
<line x1="0" y1="356.72" x2="19.3" y2="356.72" stroke="#c4c4c4" stroke-width="1"/>
<line x1="19.3" y1="369.09" x2="1065.5" y2="369.09" stroke="#dedede" stroke-width="1"/>
<line x1="0" y1="369.09" x2="19.3" y2="369.09" stroke="#c4c4c4" stroke-width="1"/>
<line x1="19.3" y1="381.45" x2="1065.5" y2="381.45" stroke="#dedede" stroke-width="1"/>
<line x1="0" y1="381.45" x2="19.3" y2="381.45" stroke="#c4c4c4" stroke-width="1"/>
<line x1="19.3" y1="393.82" x2="1065.5" y2="393.82" stroke="#dedede" stroke-width="1"/>
<line x1="0" y1="393.82" x2="19.3" y2="393.82" stroke="#c4c4c4" stroke-width="1"/>
<line x1="19.3" y1="406.19" x2="1065.5" y2="406.19" stroke="#dedede" stroke-width="1"/>
<line x1="0" y1="406.19" x2="19.3" y2="406.19" stroke="#c4c4c4" stroke-width="1"/>
<line x1="19.3" y1="418.55" x2="1065.5" y2="418.55" stroke="#dedede" stroke-width="1"/>
<line x1="0" y1="418.55" x2="19.3" y2="418.55" stroke="#c4c4c4" stroke-width="1"/>
<line x1="19.3" y1="430.92" x2="1065.5" y2="430.92" stroke="#dedede" stroke-width="1"/>
<line x1="0" y1="430.92" x2="19.3" y2="430.92" stroke="#c4c4c4" stroke-width="1"/>
<line x1="19.3" y1="443.28" x2="1065.5" y2="443.28" stroke="#dedede" stroke-width="1"/>
<line x1="0" y1="443.28" x2="19.3" y2="443.28" stroke="#c4c4c4" stroke-width="1"/>
<line x1="19.3" y1="455.65" x2="1065.5" y2="455.65" stroke="#dedede" stroke-width="1"/>
<line x1="0" y1="455.65" x2="19.3" y2="455.65" stroke="#c4c4c4" stroke-width="1"/>
<line x1="19.3" y1="468.02" x2="1065.5" y2="468.02" stroke="#dedede" stroke-width="1"/>
<line x1="0" y1="468.02" x2="19.3" y2="468.02" stroke="#c4c4c4" stroke-width="1"/>
<line x1="19.3" y1="480.38" x2="1065.5" y2="480.38" stroke="#dedede" stroke-width="1"/>
<line x1="0" y1="480.38" x2="19.3" y2="480.38" stroke="#c4c4c4" stroke-width="1"/>
<line x1="19.3" y1="492.75" x2="1065.5" y2="492.75" stroke="#dedede" stroke-width="1"/>
<line x1="0" y1="492.75" x2="19.3" y2="492.75" stroke="#c4c4c4" stroke-width="1"/>
<line x1="19.3" y1="505.11" x2="1065.5" y2="505.11" stroke="#dedede" stroke-width="1"/>
<line x1="0" y1="505.11" x2="19.3" y2="505.11" stroke="#c4c4c4" stroke-width="1"/>
<line x1="19.3" y1="517.48" x2="1065.5" y2="517.48" stroke="#dedede" stroke-width="1"/>
<line x1="0" y1="517.48" x2="19.3" y2="517.48" stroke="#c4c4c4" stroke-width="1"/>
<line x1="19.3" y1="529.85" x2="1065.5" y2="529.85" stroke="#dedede" stroke-width="1"/>
<line x1="0" y1="529.85" x2="19.3" y2="529.85" stroke="#c4c4c4" stroke-width="1"/>
<line x1="19.3" y1="542.21" x2="1065.5" y2="542.21" stroke="#dedede" stroke-width="1"/>
<line x1="0" y1="542.21" x2="19.3" y2="542.21" stroke="#c4c4c4" stroke-width="1"/>
<line x1="0" y1="146.5" x2="1065.5" y2="146.5" stroke="#ababab" stroke-width="1"/>
<line x1="19.3" y1="135" x2="19.3" y2="547" stroke="#ababab" stroke-width="1"/>
<text x="39.5" y="145.2" font-family="Liberation Serif" font-size="9" fill="#217346" text-anchor="middle">A</text>
<text x="80.0" y="145.2" font-family="Liberation Serif" font-size="9" fill="#444" text-anchor="middle">B</text>
<text x="120.5" y="145.2" font-family="Liberation Serif" font-size="9" fill="#444" text-anchor="middle">C</text>
<text x="161.1" y="145.2" font-family="Liberation Serif" font-size="9" fill="#444" text-anchor="middle">D</text>
<text x="201.6" y="145.2" font-family="Liberation Serif" font-size="9" fill="#444" text-anchor="middle">E</text>
<text x="242.1" y="145.2" font-family="Liberation Serif" font-size="9" fill="#444" text-anchor="middle">F</text>
<text x="282.6" y="145.2" font-family="Liberation Serif" font-size="9" fill="#444" text-anchor="middle">G</text>
<text x="323.1" y="145.2" font-family="Liberation Serif" font-size="9" fill="#444" text-anchor="middle">H</text>
<text x="363.6" y="145.2" font-family="Liberation Serif" font-size="9" fill="#444" text-anchor="middle">I</text>
<text x="404.1" y="145.2" font-family="Liberation Serif" font-size="9" fill="#444" text-anchor="middle">J</text>
<text x="444.6" y="145.2" font-family="Liberation Serif" font-size="9" fill="#444" text-anchor="middle">K</text>
<text x="485.1" y="145.2" font-family="Liberation Serif" font-size="9" fill="#444" text-anchor="middle">L</text>
<text x="525.5" y="145.2" font-family="Liberation Serif" font-size="9" fill="#444" text-anchor="middle">M</text>
<text x="566.0" y="145.2" font-family="Liberation Serif" font-size="9" fill="#444" text-anchor="middle">N</text>
<text x="606.5" y="145.2" font-family="Liberation Serif" font-size="9" fill="#444" text-anchor="middle">O</text>
<text x="647.0" y="145.2" font-family="Liberation Serif" font-size="9" fill="#444" text-anchor="middle">P</text>
<text x="687.5" y="145.2" font-family="Liberation Serif" font-size="9" fill="#444" text-anchor="middle">Q</text>
<text x="728.0" y="145.2" font-family="Liberation Serif" font-size="9" fill="#444" text-anchor="middle">R</text>
<text x="768.5" y="145.2" font-family="Liberation Serif" font-size="9" fill="#444" text-anchor="middle">S</text>
<text x="809.0" y="145.2" font-family="Liberation Serif" font-size="9" fill="#444" text-anchor="middle">T</text>
<text x="849.5" y="145.2" font-family="Liberation Serif" font-size="9" fill="#444" text-anchor="middle">U</text>
<text x="890.0" y="145.2" font-family="Liberation Serif" font-size="9" fill="#444" text-anchor="middle">V</text>
<text x="930.5" y="145.2" font-family="Liberation Serif" font-size="9" fill="#444" text-anchor="middle">W</text>
<text x="971.0" y="145.2" font-family="Liberation Serif" font-size="9" fill="#444" text-anchor="middle">X</text>
<text x="1011.5" y="145.2" font-family="Liberation Serif" font-size="9" fill="#444" text-anchor="middle">Y</text>
<text x="1052.0" y="145.2" font-family="Liberation Serif" font-size="9" fill="#444" text-anchor="middle">Z</text>
<text x="10.00" y="156.3" font-family="Liberation Serif" font-size="10.5" fill="#217346" text-anchor="middle">1</text>
<text x="10.00" y="168.6" font-family="Liberation Serif" font-size="10.5" fill="#444" text-anchor="middle">2</text>
<text x="10.00" y="181.0" font-family="Liberation Serif" font-size="10.5" fill="#444" text-anchor="middle">3</text>
<text x="10.00" y="193.4" font-family="Liberation Serif" font-size="10.5" fill="#444" text-anchor="middle">4</text>
<text x="10.00" y="205.7" font-family="Liberation Serif" font-size="10.5" fill="#444" text-anchor="middle">5</text>
<text x="10.00" y="218.1" font-family="Liberation Serif" font-size="10.5" fill="#444" text-anchor="middle">6</text>
<text x="10.00" y="230.5" font-family="Liberation Serif" font-size="10.5" fill="#444" text-anchor="middle">7</text>
<text x="10.00" y="242.8" font-family="Liberation Serif" font-size="10.5" fill="#444" text-anchor="middle">8</text>
<text x="10.00" y="255.2" font-family="Liberation Serif" font-size="10.5" fill="#444" text-anchor="middle">9</text>
<text x="7.56 12.43" y="267.6" font-family="Liberation Serif" font-size="10.5" fill="#444" text-anchor="middle">10</text>
<text x="7.56 12.43" y="279.9" font-family="Liberation Serif" font-size="10.5" fill="#444" text-anchor="middle">11</text>
<text x="7.56 12.43" y="292.3" font-family="Liberation Serif" font-size="10.5" fill="#444" text-anchor="middle">12</text>
<text x="7.56 12.43" y="304.7" font-family="Liberation Serif" font-size="10.5" fill="#444" text-anchor="middle">13</text>
<text x="7.56 12.43" y="317.0" font-family="Liberation Serif" font-size="10.5" fill="#444" text-anchor="middle">14</text>
<text x="7.56 12.43" y="329.4" font-family="Liberation Serif" font-size="10.5" fill="#444" text-anchor="middle">15</text>
<text x="7.56 12.43" y="341.8" font-family="Liberation Serif" font-size="10.5" fill="#444" text-anchor="middle">16</text>
<text x="7.56 12.43" y="354.1" font-family="Liberation Serif" font-size="10.5" fill="#444" text-anchor="middle">17</text>
<text x="7.56 12.43" y="366.5" font-family="Liberation Serif" font-size="10.5" fill="#444" text-anchor="middle">18</text>
<text x="7.56 12.43" y="378.9" font-family="Liberation Serif" font-size="10.5" fill="#444" text-anchor="middle">19</text>
<text x="7.56 12.43" y="391.2" font-family="Liberation Serif" font-size="10.5" fill="#444" text-anchor="middle">20</text>
<text x="7.56 12.43" y="403.6" font-family="Liberation Serif" font-size="10.5" fill="#444" text-anchor="middle">21</text>
<text x="7.56 12.43" y="416.0" font-family="Liberation Serif" font-size="10.5" fill="#444" text-anchor="middle">22</text>
<text x="7.56 12.43" y="428.3" font-family="Liberation Serif" font-size="10.5" fill="#444" text-anchor="middle">23</text>
<text x="7.56 12.43" y="440.7" font-family="Liberation Serif" font-size="10.5" fill="#444" text-anchor="middle">24</text>
<text x="7.56 12.43" y="453.1" font-family="Liberation Serif" font-size="10.5" fill="#444" text-anchor="middle">25</text>
<text x="7.56 12.43" y="465.4" font-family="Liberation Serif" font-size="10.5" fill="#444" text-anchor="middle">26</text>
<text x="7.56 12.43" y="477.8" font-family="Liberation Serif" font-size="10.5" fill="#444" text-anchor="middle">27</text>
<text x="7.56 12.43" y="490.2" font-family="Liberation Serif" font-size="10.5" fill="#444" text-anchor="middle">28</text>
<text x="7.56 12.43" y="502.5" font-family="Liberation Serif" font-size="10.5" fill="#444" text-anchor="middle">29</text>
<text x="7.56 12.43" y="514.9" font-family="Liberation Serif" font-size="10.5" fill="#444" text-anchor="middle">30</text>
<text x="7.56 12.43" y="527.3" font-family="Liberation Serif" font-size="10.5" fill="#444" text-anchor="middle">31</text>
<text x="7.56 12.43" y="539.6" font-family="Liberation Serif" font-size="10.5" fill="#444" text-anchor="middle">32</text>
<text x="7.56 12.43" y="552.0" font-family="Liberation Serif" font-size="10.5" fill="#444" text-anchor="middle">33</text>
<clipPath id="cA"><rect x="19.3" y="140" width="40.0" height="100"/></clipPath>
<text x="24.63 29.50 34.38 39.25" y="156.50" font-family="Liberation Serif" font-size="10.5" fill="#2a2a2a" text-anchor="middle" >Date</text>
<text x="65.13 70.00 74.88 79.75 84.61 89.48" y="156.50" font-family="Liberation Serif" font-size="10.5" fill="#2a2a2a" text-anchor="middle" >Volume</text>
<text x="105.64 110.50 115.38 120.25" y="156.50" font-family="Liberation Serif" font-size="10.5" fill="#2a2a2a" text-anchor="middle" >Open</text>
<text x="146.14 151.01 155.88 160.75" y="156.50" font-family="Liberation Serif" font-size="10.5" fill="#2a2a2a" text-anchor="middle" >High</text>
<text x="186.64 191.51 196.38" y="156.50" font-family="Liberation Serif" font-size="10.5" fill="#2a2a2a" text-anchor="middle" >Low</text>
<text x="227.14 232.01 236.88 241.75 246.62" y="156.50" font-family="Liberation Serif" font-size="10.5" fill="#2a2a2a" text-anchor="middle" >Close</text>
<text x="24.34 29.21 34.08 38.95 43.81 48.69 53.56 58.42 63.30 68.17" y="168.97" font-family="Liberation Serif" font-size="10.5" fill="#2a2a2a" text-anchor="middle" clip-path="url(#cA)">2015-01-01</text>
<text x="76.19 81.06 85.92 90.80 95.66" y="168.97" font-family="Liberation Serif" font-size="10.5" fill="#2a2a2a" text-anchor="middle" >20000</text>
<text x="121.56 126.43 131.30 136.17" y="168.97" font-family="Liberation Serif" font-size="10.5" fill="#2a2a2a" text-anchor="middle" >26.2</text>
<text x="162.06 166.93 171.80 176.67" y="168.97" font-family="Liberation Serif" font-size="10.5" fill="#2a2a2a" text-anchor="middle" >27.2</text>
<text x="197.69 202.56 207.43 212.30 217.17" y="168.97" font-family="Liberation Serif" font-size="10.5" fill="#2a2a2a" text-anchor="middle" >23.49</text>
<text x="238.19 243.06 247.93 252.80 257.67" y="168.97" font-family="Liberation Serif" font-size="10.5" fill="#2a2a2a" text-anchor="middle" >25.45</text>
<text x="24.34 29.21 34.08 38.95 43.81 48.69 53.56 58.42 63.30 68.17" y="181.33" font-family="Liberation Serif" font-size="10.5" fill="#2a2a2a" text-anchor="middle" clip-path="url(#cA)">2015-01-01</text>
<text x="76.19 81.06 85.92 90.80 95.66" y="181.33" font-family="Liberation Serif" font-size="10.5" fill="#2a2a2a" text-anchor="middle" >10000</text>
<text x="116.69 121.56 126.43 131.30 136.17" y="181.33" font-family="Liberation Serif" font-size="10.5" fill="#2a2a2a" text-anchor="middle" >25.45</text>
<text x="157.19 162.06 166.93 171.80 176.67" y="181.33" font-family="Liberation Serif" font-size="10.5" fill="#2a2a2a" text-anchor="middle" >25.03</text>
<text x="197.69 202.56 207.43 212.30 217.17" y="181.33" font-family="Liberation Serif" font-size="10.5" fill="#2a2a2a" text-anchor="middle" >19.55</text>
<text x="238.19 243.06 247.93 252.80 257.67" y="181.33" font-family="Liberation Serif" font-size="10.5" fill="#2a2a2a" text-anchor="middle" >23.05</text>
<text x="24.34 29.21 34.08 38.95 43.81 48.69 53.56 58.42 63.30 68.17" y="193.70" font-family="Liberation Serif" font-size="10.5" fill="#2a2a2a" text-anchor="middle" clip-path="url(#cA)">2015-01-01</text>
<text x="76.19 81.06 85.92 90.80 95.66" y="193.70" font-family="Liberation Serif" font-size="10.5" fill="#2a2a2a" text-anchor="middle" >15000</text>
<text x="116.69 121.56 126.43 131.30 136.17" y="193.70" font-family="Liberation Serif" font-size="10.5" fill="#2a2a2a" text-anchor="middle" >23.05</text>
<text x="157.19 162.06 166.93 171.80 176.67" y="193.70" font-family="Liberation Serif" font-size="10.5" fill="#2a2a2a" text-anchor="middle" >24.46</text>
<text x="197.69 202.56 207.43 212.30 217.17" y="193.70" font-family="Liberation Serif" font-size="10.5" fill="#2a2a2a" text-anchor="middle" >20.03</text>
<text x="238.19 243.06 247.93 252.80 257.67" y="193.70" font-family="Liberation Serif" font-size="10.5" fill="#2a2a2a" text-anchor="middle" >22.42</text>
<text x="24.34 29.21 34.08 38.95 43.81 48.69 53.56 58.42 63.30 68.17" y="206.06" font-family="Liberation Serif" font-size="10.5" fill="#2a2a2a" text-anchor="middle" clip-path="url(#cA)">2015-01-01</text>
<text x="81.05 85.92 90.79 95.66" y="206.06" font-family="Liberation Serif" font-size="10.5" fill="#2a2a2a" text-anchor="middle" >2000</text>
<text x="116.69 121.56 126.43 131.30 136.17" y="206.06" font-family="Liberation Serif" font-size="10.5" fill="#2a2a2a" text-anchor="middle" >22.42</text>
<text x="157.19 162.06 166.93 171.80 176.67" y="206.06" font-family="Liberation Serif" font-size="10.5" fill="#2a2a2a" text-anchor="middle" >23.97</text>
<text x="197.69 202.56 207.43 212.30 217.17" y="206.06" font-family="Liberation Serif" font-size="10.5" fill="#2a2a2a" text-anchor="middle" >20.07</text>
<text x="243.06 247.93 252.80 257.67" y="206.06" font-family="Liberation Serif" font-size="10.5" fill="#2a2a2a" text-anchor="middle" >21.9</text>
<text x="24.34 29.21 34.08 38.95 43.81 48.69 53.56 58.42 63.30 68.17" y="218.43" font-family="Liberation Serif" font-size="10.5" fill="#2a2a2a" text-anchor="middle" clip-path="url(#cA)">2015-01-01</text>
<text x="76.19 81.06 85.92 90.80 95.66" y="218.43" font-family="Liberation Serif" font-size="10.5" fill="#2a2a2a" text-anchor="middle" >12000</text>
<text x="121.56 126.43 131.30 136.17" y="218.43" font-family="Liberation Serif" font-size="10.5" fill="#2a2a2a" text-anchor="middle" >21.9</text>
<text x="157.19 162.06 166.93 171.80 176.67" y="218.43" font-family="Liberation Serif" font-size="10.5" fill="#2a2a2a" text-anchor="middle" >23.65</text>
<text x="202.56 207.43 212.30 217.17" y="218.43" font-family="Liberation Serif" font-size="10.5" fill="#2a2a2a" text-anchor="middle" >19.5</text>
<text x="238.19 243.06 247.93 252.80 257.67" y="218.43" font-family="Liberation Serif" font-size="10.5" fill="#2a2a2a" text-anchor="middle" >21.51</text>
<rect x="19.1" y="145.9" width="40.9" height="13.0" fill="none" stroke="#2b7a4b" stroke-width="1.7"/>
<rect x="58.2" y="157.3" width="3.2" height="3.2" fill="#1f6b3e" stroke="#fff" stroke-width="0.5"/>
<rect x="303" y="158.5" width="358.3" height="179.5" fill="#fff" stroke="#a6a6a6" stroke-width="1"/>
<text x="482.0" y="179.0" font-size="13" fill="#000" text-anchor="middle" font-weight="bold" textLength="91.5" lengthAdjust="spacingAndGlyphs">High-low-close</text>
<line x1="324.5" y1="194.40" x2="614.5" y2="194.40" stroke="#9a9a9a" stroke-width="1"/>
<text x="317.0" y="196.4" font-size="7.7" fill="#262626" text-anchor="end" font-weight="normal" >30</text>
<line x1="324.5" y1="214.70" x2="614.5" y2="214.70" stroke="#9a9a9a" stroke-width="1"/>
<text x="317.0" y="216.7" font-size="7.7" fill="#262626" text-anchor="end" font-weight="normal" >25</text>
<line x1="324.5" y1="235.00" x2="614.5" y2="235.00" stroke="#9a9a9a" stroke-width="1"/>
<text x="317.0" y="237.0" font-size="7.7" fill="#262626" text-anchor="end" font-weight="normal" >20</text>
<line x1="324.5" y1="255.30" x2="614.5" y2="255.30" stroke="#9a9a9a" stroke-width="1"/>
<text x="317.0" y="257.3" font-size="7.7" fill="#262626" text-anchor="end" font-weight="normal" >15</text>
<line x1="324.5" y1="275.60" x2="614.5" y2="275.60" stroke="#9a9a9a" stroke-width="1"/>
<text x="317.0" y="277.6" font-size="7.7" fill="#262626" text-anchor="end" font-weight="normal" >10</text>
<line x1="324.5" y1="295.90" x2="614.5" y2="295.90" stroke="#9a9a9a" stroke-width="1"/>
<text x="317.0" y="297.9" font-size="7.7" fill="#262626" text-anchor="end" font-weight="normal" >5</text>
<line x1="324.5" y1="316.20" x2="614.5" y2="316.20" stroke="#9a9a9a" stroke-width="1"/>
<text x="317.0" y="318.2" font-size="7.7" fill="#262626" text-anchor="end" font-weight="normal" >0</text>
<line x1="324.5" y1="194.4" x2="324.5" y2="316.2" stroke="#9a9a9a" stroke-width="1"/>
<text x="353.5" y="330.3" font-size="7.5" fill="#262626" text-anchor="middle" font-weight="normal" >2015-01-01</text>
<line x1="353.50" y1="205.77" x2="353.50" y2="220.83" stroke="#222" stroke-width="0.8"/>
<line x1="352.50" y1="212.87" x2="355.00" y2="212.87" stroke="#9bbb59" stroke-width="1"/>
<text x="411.5" y="330.3" font-size="7.5" fill="#262626" text-anchor="middle" font-weight="normal" >2015-01-02</text>
<line x1="411.50" y1="214.58" x2="411.50" y2="236.83" stroke="#222" stroke-width="0.8"/>
<line x1="410.50" y1="222.62" x2="413.00" y2="222.62" stroke="#9bbb59" stroke-width="1"/>
<text x="469.5" y="330.3" font-size="7.5" fill="#262626" text-anchor="middle" font-weight="normal" >2015-01-03</text>
<line x1="469.50" y1="216.89" x2="469.50" y2="234.88" stroke="#222" stroke-width="0.8"/>
<line x1="468.50" y1="225.17" x2="471.00" y2="225.17" stroke="#9bbb59" stroke-width="1"/>
<text x="527.5" y="330.3" font-size="7.5" fill="#262626" text-anchor="middle" font-weight="normal" >2015-01-04</text>
<line x1="527.50" y1="218.88" x2="527.50" y2="234.72" stroke="#222" stroke-width="0.8"/>
<line x1="526.50" y1="227.29" x2="529.00" y2="227.29" stroke="#9bbb59" stroke-width="1"/>
<text x="585.5" y="330.3" font-size="7.5" fill="#262626" text-anchor="middle" font-weight="normal" >2015-01-05</text>
<line x1="585.50" y1="220.18" x2="585.50" y2="237.03" stroke="#222" stroke-width="0.8"/>
<line x1="584.50" y1="228.87" x2="587.00" y2="228.87" stroke="#9bbb59" stroke-width="1"/>
<text x="634.5" y="248.6" font-size="7.5" fill="#262626" text-anchor="start" font-weight="normal" >High</text>
<text x="634.5" y="264.0" font-size="7.5" fill="#262626" text-anchor="start" font-weight="normal" >Low</text>
<text x="634.5" y="278.7" font-size="7.5" fill="#262626" text-anchor="start" font-weight="normal" >Close</text>
<line x1="629.5" y1="276" x2="632" y2="276" stroke="#9bbb59" stroke-width="1"/>
<rect x="667.3" y="158.5" width="359.1" height="179.5" fill="#fff" stroke="#a6a6a6" stroke-width="1"/>
<text x="846.7" y="179.0" font-size="13" fill="#000" text-anchor="middle" font-weight="bold" textLength="130" lengthAdjust="spacingAndGlyphs">Open-high-low-close</text>
<line x1="688.2" y1="194.20" x2="978.7" y2="194.20" stroke="#9a9a9a" stroke-width="1"/>
<text x="681.5" y="196.2" font-size="7.7" fill="#262626" text-anchor="end" font-weight="normal" >30</text>
<line x1="688.2" y1="214.53" x2="978.7" y2="214.53" stroke="#9a9a9a" stroke-width="1"/>
<text x="681.5" y="216.5" font-size="7.7" fill="#262626" text-anchor="end" font-weight="normal" >25</text>
<line x1="688.2" y1="234.87" x2="978.7" y2="234.87" stroke="#9a9a9a" stroke-width="1"/>
<text x="681.5" y="236.9" font-size="7.7" fill="#262626" text-anchor="end" font-weight="normal" >20</text>
<line x1="688.2" y1="255.20" x2="978.7" y2="255.20" stroke="#9a9a9a" stroke-width="1"/>
<text x="681.5" y="257.2" font-size="7.7" fill="#262626" text-anchor="end" font-weight="normal" >15</text>
<line x1="688.2" y1="275.53" x2="978.7" y2="275.53" stroke="#9a9a9a" stroke-width="1"/>
<text x="681.5" y="277.5" font-size="7.7" fill="#262626" text-anchor="end" font-weight="normal" >10</text>
<line x1="688.2" y1="295.87" x2="978.7" y2="295.87" stroke="#9a9a9a" stroke-width="1"/>
<text x="681.5" y="297.9" font-size="7.7" fill="#262626" text-anchor="end" font-weight="normal" >5</text>
<line x1="688.2" y1="316.20" x2="978.7" y2="316.20" stroke="#9a9a9a" stroke-width="1"/>
<text x="681.5" y="318.2" font-size="7.7" fill="#262626" text-anchor="end" font-weight="normal" >0</text>
<line x1="688.2" y1="194.2" x2="688.2" y2="316.2" stroke="#9a9a9a" stroke-width="1"/>
<text x="717.2" y="330.3" font-size="7.5" fill="#262626" text-anchor="middle" font-weight="normal" >2015-01-01</text>
<line x1="717.25" y1="205.59" x2="717.25" y2="220.67" stroke="#000" stroke-width="0.9"/>
<rect x="705.50" y="209.65" width="23.5" height="3.05" fill="#404040" stroke="#000" stroke-width="0.9"/>
<text x="775.4" y="330.3" font-size="7.5" fill="#262626" text-anchor="middle" font-weight="normal" >2015-01-02</text>
<line x1="775.35" y1="212.70" x2="775.35" y2="236.70" stroke="#000" stroke-width="0.9"/>
<rect x="763.60" y="212.70" width="23.5" height="9.76" fill="#404040" stroke="#000" stroke-width="0.9"/>
<text x="833.5" y="330.3" font-size="7.5" fill="#262626" text-anchor="middle" font-weight="normal" >2015-01-03</text>
<line x1="833.45" y1="216.73" x2="833.45" y2="234.74" stroke="#000" stroke-width="0.9"/>
<rect x="821.70" y="222.46" width="23.5" height="2.56" fill="#404040" stroke="#000" stroke-width="0.9"/>
<text x="891.6" y="330.3" font-size="7.5" fill="#262626" text-anchor="middle" font-weight="normal" >2015-01-04</text>
<line x1="891.55" y1="218.72" x2="891.55" y2="234.58" stroke="#000" stroke-width="0.9"/>
<rect x="879.80" y="225.03" width="23.5" height="2.11" fill="#404040" stroke="#000" stroke-width="0.9"/>
<text x="949.7" y="330.3" font-size="7.5" fill="#262626" text-anchor="middle" font-weight="normal" >2015-01-05</text>
<line x1="949.65" y1="220.02" x2="949.65" y2="236.90" stroke="#000" stroke-width="0.9"/>
<rect x="937.90" y="227.14" width="23.5" height="1.59" fill="#404040" stroke="#000" stroke-width="0.9"/>
<text x="998.5" y="240.7" font-size="7.5" fill="#262626" text-anchor="start" font-weight="normal" >Open</text>
<text x="998.5" y="255.8" font-size="7.5" fill="#262626" text-anchor="start" font-weight="normal" >High</text>
<text x="998.5" y="271.0" font-size="7.5" fill="#262626" text-anchor="start" font-weight="normal" >Low</text>
<text x="998.5" y="286.1" font-size="7.5" fill="#262626" text-anchor="start" font-weight="normal" >Close</text>
<rect x="303" y="357" width="358.6" height="178.5" fill="#fff" stroke="#a6a6a6" stroke-width="1"/>
<rect x="342.5" y="365.5" width="238.20" height="148.80" fill="none" stroke="#9a9a9a" stroke-width="1"/>
<line x1="342.5" y1="395.26" x2="580.7" y2="395.26" stroke="#9a9a9a" stroke-width="1"/>
<line x1="342.5" y1="425.02" x2="580.7" y2="425.02" stroke="#9a9a9a" stroke-width="1"/>
<line x1="342.5" y1="454.78" x2="580.7" y2="454.78" stroke="#9a9a9a" stroke-width="1"/>
<line x1="342.5" y1="484.54" x2="580.7" y2="484.54" stroke="#9a9a9a" stroke-width="1"/>
<text x="588.8" y="368.2" font-size="7.5" fill="#262626" text-anchor="start" font-weight="normal" >25000</text>
<text x="588.8" y="398.0" font-size="7.5" fill="#262626" text-anchor="start" font-weight="normal" >20000</text>
<text x="588.8" y="427.7" font-size="7.5" fill="#262626" text-anchor="start" font-weight="normal" >15000</text>
<text x="588.8" y="457.5" font-size="7.5" fill="#262626" text-anchor="start" font-weight="normal" >10000</text>
<text x="588.8" y="487.2" font-size="7.5" fill="#262626" text-anchor="start" font-weight="normal" >5000</text>
<text x="588.8" y="517.0" font-size="7.5" fill="#262626" text-anchor="start" font-weight="normal" >0</text>
<text x="334.5" y="368.2" font-size="7.5" fill="#262626" text-anchor="end" font-weight="normal" >30</text>
<text x="334.5" y="393.0" font-size="7.5" fill="#262626" text-anchor="end" font-weight="normal" >25</text>
<text x="334.5" y="417.8" font-size="7.5" fill="#262626" text-anchor="end" font-weight="normal" >20</text>
<text x="334.5" y="442.6" font-size="7.5" fill="#262626" text-anchor="end" font-weight="normal" >15</text>
<text x="334.5" y="467.4" font-size="7.5" fill="#262626" text-anchor="end" font-weight="normal" >10</text>
<text x="334.5" y="492.2" font-size="7.5" fill="#262626" text-anchor="end" font-weight="normal" >5</text>
<text x="334.5" y="517.0" font-size="7.5" fill="#262626" text-anchor="end" font-weight="normal" >0</text>
<text x="0" y="0" font-size="7" font-weight="bold" fill="#000" text-anchor="middle" transform="translate(320.5,439.9) rotate(-90)">Price</text>
<text x="366.3" y="527.6" font-size="7.5" fill="#262626" text-anchor="middle" font-weight="normal" >2015-01-01</text>
<rect x="356.82" y="395.26" width="19" height="119.04" fill="#4f81bd"/>
<text x="414.0" y="527.6" font-size="7.5" fill="#262626" text-anchor="middle" font-weight="normal" >2015-01-02</text>
<rect x="404.46" y="454.78" width="19" height="59.52" fill="#4f81bd"/>
<text x="461.6" y="527.6" font-size="7.5" fill="#262626" text-anchor="middle" font-weight="normal" >2015-01-03</text>
<rect x="452.10" y="425.02" width="19" height="89.28" fill="#4f81bd"/>
<text x="509.2" y="527.6" font-size="7.5" fill="#262626" text-anchor="middle" font-weight="normal" >2015-01-04</text>
<rect x="499.74" y="502.40" width="19" height="11.90" fill="#4f81bd"/>
<text x="556.9" y="527.6" font-size="7.5" fill="#262626" text-anchor="middle" font-weight="normal" >2015-01-05</text>
<rect x="547.38" y="442.88" width="19" height="71.42" fill="#4f81bd"/>
<line x1="366.32" y1="379.39" x2="366.32" y2="397.79" stroke="#222" stroke-width="0.8"/>
<line x1="365.82" y1="388.07" x2="368.32" y2="388.07" stroke="#8064a2" stroke-width="1"/>
<line x1="413.96" y1="390.15" x2="413.96" y2="417.33" stroke="#222" stroke-width="0.8"/>
<line x1="413.46" y1="399.97" x2="415.96" y2="399.97" stroke="#8064a2" stroke-width="1"/>
<line x1="461.60" y1="392.98" x2="461.60" y2="414.95" stroke="#222" stroke-width="0.8"/>
<line x1="461.10" y1="403.10" x2="463.60" y2="403.10" stroke="#8064a2" stroke-width="1"/>
<line x1="509.24" y1="395.41" x2="509.24" y2="414.75" stroke="#222" stroke-width="0.8"/>
<line x1="508.74" y1="405.68" x2="511.24" y2="405.68" stroke="#8064a2" stroke-width="1"/>
<line x1="556.88" y1="397.00" x2="556.88" y2="417.58" stroke="#222" stroke-width="0.8"/>
<line x1="556.38" y1="407.61" x2="558.88" y2="407.61" stroke="#8064a2" stroke-width="1"/>
<rect x="620" y="421" width="4.5" height="4.5" fill="#4f81bd"/>
<text x="626.5" y="425.7" font-size="7.5" fill="#262626" text-anchor="start" font-weight="normal" >Volume</text>
<text x="626.5" y="440.8" font-size="7.5" fill="#262626" text-anchor="start" font-weight="normal" >High</text>
<text x="626.5" y="455.9" font-size="7.5" fill="#262626" text-anchor="start" font-weight="normal" >Low</text>
<text x="626.5" y="471.0" font-size="7.5" fill="#262626" text-anchor="start" font-weight="normal" >Close</text>
<line x1="621" y1="468.3" x2="623.5" y2="468.3" stroke="#8064a2" stroke-width="1"/>
<rect x="667.3" y="357" width="359.1" height="178.5" fill="#fff" stroke="#a6a6a6" stroke-width="1"/>
<rect x="706.8" y="365.4" width="239.10" height="148.80" fill="none" stroke="#9a9a9a" stroke-width="1"/>
<line x1="706.8" y1="395.16" x2="945.9" y2="395.16" stroke="#9a9a9a" stroke-width="1"/>
<line x1="706.8" y1="424.92" x2="945.9" y2="424.92" stroke="#9a9a9a" stroke-width="1"/>
<line x1="706.8" y1="454.68" x2="945.9" y2="454.68" stroke="#9a9a9a" stroke-width="1"/>
<line x1="706.8" y1="484.44" x2="945.9" y2="484.44" stroke="#9a9a9a" stroke-width="1"/>
<text x="952.5" y="368.1" font-size="7.5" fill="#262626" text-anchor="start" font-weight="normal" >25000</text>
<text x="952.5" y="397.9" font-size="7.5" fill="#262626" text-anchor="start" font-weight="normal" >20000</text>
<text x="952.5" y="427.6" font-size="7.5" fill="#262626" text-anchor="start" font-weight="normal" >15000</text>
<text x="952.5" y="457.4" font-size="7.5" fill="#262626" text-anchor="start" font-weight="normal" >10000</text>
<text x="952.5" y="487.1" font-size="7.5" fill="#262626" text-anchor="start" font-weight="normal" >5000</text>
<text x="952.5" y="516.9" font-size="7.5" fill="#262626" text-anchor="start" font-weight="normal" >0</text>
<text x="699.6" y="368.1" font-size="7.5" fill="#262626" text-anchor="end" font-weight="normal" >30</text>
<text x="699.6" y="392.9" font-size="7.5" fill="#262626" text-anchor="end" font-weight="normal" >25</text>
<text x="699.6" y="417.7" font-size="7.5" fill="#262626" text-anchor="end" font-weight="normal" >20</text>
<text x="699.6" y="442.5" font-size="7.5" fill="#262626" text-anchor="end" font-weight="normal" >15</text>
<text x="699.6" y="467.3" font-size="7.5" fill="#262626" text-anchor="end" font-weight="normal" >10</text>
<text x="699.6" y="492.1" font-size="7.5" fill="#262626" text-anchor="end" font-weight="normal" >5</text>
<text x="699.6" y="516.9" font-size="7.5" fill="#262626" text-anchor="end" font-weight="normal" >0</text>
<text x="0" y="0" font-size="7" font-weight="bold" fill="#000" text-anchor="middle" transform="translate(684.5,439.8) rotate(-90)">Price</text>
<text x="730.7" y="527.6" font-size="7.5" fill="#262626" text-anchor="middle" font-weight="normal" >2015-01-01</text>
<rect x="721.21" y="395.16" width="19" height="119.04" fill="#4f81bd"/>
<text x="778.5" y="527.6" font-size="7.5" fill="#262626" text-anchor="middle" font-weight="normal" >2015-01-02</text>
<rect x="769.03" y="454.68" width="19" height="59.52" fill="#4f81bd"/>
<text x="826.3" y="527.6" font-size="7.5" fill="#262626" text-anchor="middle" font-weight="normal" >2015-01-03</text>
<rect x="816.85" y="424.92" width="19" height="89.28" fill="#4f81bd"/>
<text x="874.2" y="527.6" font-size="7.5" fill="#262626" text-anchor="middle" font-weight="normal" >2015-01-04</text>
<rect x="864.67" y="502.30" width="19" height="11.90" fill="#4f81bd"/>
<text x="922.0" y="527.6" font-size="7.5" fill="#262626" text-anchor="middle" font-weight="normal" >2015-01-05</text>
<rect x="912.49" y="442.78" width="19" height="71.42" fill="#4f81bd"/>
<line x1="730.71" y1="379.29" x2="730.71" y2="397.69" stroke="#000" stroke-width="0.9"/>
<rect x="721.21" y="384.25" width="19" height="3.72" fill="#404040" stroke="#000" stroke-width="0.9"/>
<line x1="778.53" y1="387.97" x2="778.53" y2="417.23" stroke="#000" stroke-width="0.9"/>
<rect x="769.03" y="387.97" width="19" height="11.90" fill="#404040" stroke="#000" stroke-width="0.9"/>
<line x1="826.35" y1="392.88" x2="826.35" y2="414.85" stroke="#000" stroke-width="0.9"/>
<rect x="816.85" y="399.87" width="19" height="3.12" fill="#404040" stroke="#000" stroke-width="0.9"/>
<line x1="874.17" y1="395.31" x2="874.17" y2="414.65" stroke="#000" stroke-width="0.9"/>
<rect x="864.67" y="403.00" width="19" height="2.58" fill="#404040" stroke="#000" stroke-width="0.9"/>
<line x1="921.99" y1="396.90" x2="921.99" y2="417.48" stroke="#000" stroke-width="0.9"/>
<rect x="912.49" y="405.58" width="19" height="1.93" fill="#404040" stroke="#000" stroke-width="0.9"/>
<rect x="984.5" y="413" width="4.5" height="4.5" fill="#4f81bd"/>
<text x="991.0" y="417.7" font-size="7.6" fill="#262626" text-anchor="start" font-weight="normal" >Volume</text>
<text x="991.0" y="432.9" font-size="7.6" fill="#262626" text-anchor="start" font-weight="normal" >Open</text>
<text x="991.0" y="448.2" font-size="7.6" fill="#262626" text-anchor="start" font-weight="normal" >High</text>
<text x="991.0" y="463.4" font-size="7.6" fill="#262626" text-anchor="start" font-weight="normal" >Low</text>
<text x="991.0" y="478.7" font-size="7.6" fill="#262626" text-anchor="start" font-weight="normal" >Close</text>
<rect x="1066" y="135" width="14" height="412" fill="#e6e6e6" />
<line x1="1065.5" y1="146.5" x2="1065.5" y2="547" stroke="#ababab" stroke-width="1" />
<rect x="1067.5" y="137" width="10.5" height="9.8" fill="#fff" stroke="#dedede" stroke-width="0.6" />
<path d="M1070.3 143.3L1072.8 140.8L1075.3 143.3Z" fill="#555"/>
<rect x="1067.5" y="147.8" width="10.5" height="366.5" fill="#fff" stroke="#dedede" stroke-width="0.6" />
<rect x="1067.5" y="537.8" width="10.5" height="9.5" fill="#fff" stroke="#dedede" stroke-width="0.6" />
<path d="M1070.55 541.25h4.5l-2.25 2.5z" fill="#666"/>
<rect x="0" y="547" width="1080" height="17" fill="#e6e6e6" />
<line x1="0" y1="547.3" x2="1066" y2="547.3" stroke="#c8c8c8" stroke-width="0.8" />
<path d="M18.5 552.5L16 555.5L18.5 558.5" fill="#c8c8c8"/>
<path d="M32.5 552.5L35 555.5L32.5 558.5" fill="#c8c8c8"/>
<rect x="58" y="547" width="40.5" height="14.5" fill="#fff" />
<line x1="58" y1="547" x2="58" y2="561.5" stroke="#c8c8c8" stroke-width="0.6" />
<line x1="98.5" y1="547" x2="98.5" y2="561.5" stroke="#c8c8c8" stroke-width="0.6" />
<rect x="58" y="560.8" width="40.5" height="1.7" fill="#217346" />
<text x="65.50" y="557.50" font-size="10.3" fill="#217346" textLength="25.5" lengthAdjust="spacingAndGlyphs" >Sheet</text>
<circle cx="122.5" cy="555.5" r="5.3" fill="none" stroke="#777" stroke-width="0.9"/>
<path d="M119.5 555.5H125.5M122.5 552.5V558.5" stroke="#777" stroke-width="1"/>
<rect x="646.5" y="552.0" width="1" height="1" fill="#999" />
<rect x="646.5" y="555.0" width="1" height="1" fill="#999" />
<rect x="646.5" y="558.0" width="1" height="1" fill="#999" />
<rect x="656.5" y="550" width="10.5" height="10" fill="#fff" stroke="#dcdcdc" stroke-width="0.6" />
<path d="M659.5 555L663 552.3V557.7Z" fill="#555"/>
<rect x="667.5" y="550" width="357.5" height="10" fill="#fff" stroke="#cfcfcf" stroke-width="0.6" />
<rect x="1055.5" y="550" width="10" height="10" fill="#fff" stroke="#dcdcdc" stroke-width="0.6" />
<path d="M1062 555L1058.5 552.3V557.7Z" fill="#555"/>
<rect x="0" y="564" width="1080" height="15" fill="#f3f3f3" />
<text x="4.00" y="574.48" font-size="8.5" fill="#444" textLength="16" lengthAdjust="spacingAndGlyphs" >就绪</text>
<rect x="33.5" y="567.5" width="7" height="7.5" fill="none" stroke="#777" stroke-width="0.8" />
<path d="M35.5 567V575M38.5 567V575" stroke="#888" stroke-width="0.6"/>
<rect x="33.5" y="566" width="2.5" height="2" fill="#555" />
<rect x="885" y="564" width="23" height="15" fill="#d2d2d2" />
<rect x="891.5" y="567.5" width="9" height="8" fill="none" stroke="#777" stroke-width="0.8" />
<path d="M891.5 570.2H900.5M891.5 572.8H900.5M894.5 567.5V575.5M897.5 567.5V575.5" stroke="#777" stroke-width="0.6"/>
<rect x="915.5" y="567.5" width="9" height="8" fill="none" stroke="#888" stroke-width="0.8" />
<path d="M917.5 568.5V574.5M922.5 568.5V574.5" stroke="#888" stroke-width="0.7"/>
<path d="M939 567.5V575.5H948V567.5M941.5 567.5V570.5H945.5V567.5" fill="none" stroke="#888" stroke-width="0.8"/>
<line x1="957.5" y1="571.5" x2="962" y2="571.5" stroke="#555" stroke-width="1.1" />
<line x1="965" y1="571.5" x2="1035" y2="571.5" stroke="#aaa" stroke-width="0.7" />
<line x1="1000" y1="569.5" x2="1000" y2="573.5" stroke="#aaa" stroke-width="0.7" />
<rect x="995" y="568" width="2.4" height="7.5" fill="#555" />
<path d="M1037 571.5H1044M1040.5 568V575" stroke="#555" stroke-width="1.1"/>
<text x="1052.00" y="574.65" font-size="9" fill="#444" textLength="18" lengthAdjust="spacingAndGlyphs" >90%</text>
<path d="M905 512.5C897.5 512.5 892.5 517.3 892.5 523C892.5 526.5 894.2 529.3 897 531.3L895.5 536.5L901 533.3C902.2 533.6 903.6 533.6 905 533.6C912.5 533.6 917.5 528.8 917.5 523C917.5 517.3 912.5 512.5 905 512.5Z" fill="#fff" stroke="#c4c4c4" stroke-width="1.6" paint-order="stroke"/>
<circle cx="899" cy="519.5" r="1.3" fill="none" stroke="#888" stroke-width="0.7"/><circle cx="910" cy="519.5" r="1.3" fill="none" stroke="#888" stroke-width="0.7"/>
<path d="M918.5 522.5C910.5 522.5 905 527.8 905 534C905 540.3 910.5 545.5 918.5 545.5C920 545.5 921.5 545.3 923 544.9L928.5 547.8L927 543C930 541 932 537.8 932 534C932 527.8 926.5 522.5 918.5 522.5Z" fill="#fff" stroke="#b8b8b8" stroke-width="1.6" paint-order="stroke"/>
<circle cx="914" cy="530" r="1.2" fill="none" stroke="#888" stroke-width="0.7"/><circle cx="923.5" cy="530" r="1.2" fill="none" stroke="#888" stroke-width="0.7"/>
<text x="937" y="541" font-size="22" fill="#fff" stroke="#9a9a9a" stroke-width="1.4" paint-order="stroke" textLength="107" lengthAdjust="spacingAndGlyphs" font-weight="300">是山月呀</text>
</svg></body></html>
